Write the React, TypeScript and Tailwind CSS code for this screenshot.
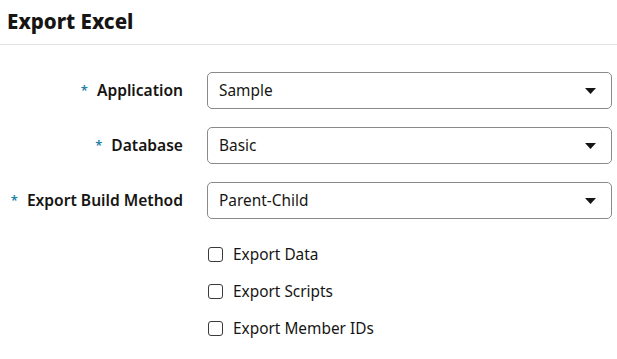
import React from "react";

const font = { fontFamily: '"Noto Sans", "Open Sans", sans-serif' };

function Arrow() {
  return (
    <svg width="11" height="6" viewBox="0 0 11 6" className="shrink-0">
      <path d="M0 0 L11 0 L5.5 6 Z" fill="#161513" />
    </svg>
  );
}

function Row({ label, value }: { label: string; value: string }) {
  return (
    <div className="flex items-center h-[37px]">
      <div className="w-[183px] flex justify-end items-center text-[15.6px] font-semibold text-[#161513]">
        <span className="text-[#1f80a8] text-[13px] mr-[9px]">*</span>
        <span>{label}</span>
      </div>
      <div className="ml-[24px] w-[405px] h-[37px] border border-[#8b8a88] rounded-[5px] flex items-center justify-between pl-[11px] pr-[15px] text-[15.4px] text-[#161513]">
        <span>{value}</span>
        <Arrow />
      </div>
    </div>
  );
}

function Check({ label }: { label: string }) {
  return (
    <div className="flex items-center h-[37px]">
      <div className="w-[15px] h-[15px] border-[1.5px] border-[#3b3a38] rounded-[3px] bg-white" />
      <span className="ml-[10px] text-[15.4px] text-[#161513]">{label}</span>
    </div>
  );
}

export default function App() {
  return (
    <div className="w-[617px] h-[359px] bg-white overflow-hidden" style={font}>
      <div className="h-[45px] border-b border-[#e4e3e1] flex items-center pl-[7px]">
        <h1 className="text-[20.5px] font-extrabold text-[#161513] leading-none -mt-[2px]">Export Excel</h1>
      </div>
      <div className="pt-[27px] flex flex-col gap-[18px]">
        <Row label="Application" value="Sample" />
        <Row label="Database" value="Basic" />
        <Row label="Export Build Method" value="Parent-Child" />
      </div>
      <div className="pl-[208px] pt-[17px] flex flex-col">
        <Check label="Export Data" />
        <Check label="Export Scripts" />
        <Check label="Export Member IDs" />
      </div>
    </div>
  );
}
